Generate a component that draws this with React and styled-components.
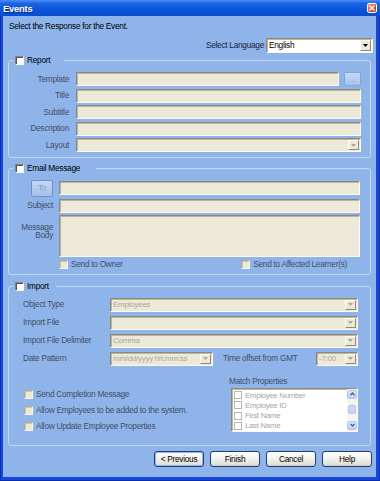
import React from "react";
import styled, { createGlobalStyle, css } from "styled-components";

const GlobalStyle = createGlobalStyle`
  html, body { margin: 0; padding: 0; }
  body {
    width: 380px; height: 481px; overflow: hidden; background: #8fb4ea;
    font-family: "Liberation Sans", Arial, sans-serif;
    font-size: 8.3px; letter-spacing: -0.28px; color: #000;
  }
  * { box-sizing: border-box; }
`;

const inset = css`
  border: 1px solid;
  border-color: #8e8a77 #fbfaf6 #fbfaf6 #8e8a77;
  box-shadow: inset 1px 1px 0 #b9b5a3;
`;

const Window = styled.div`
  width: 380px; height: 481px;
  display: flex; flex-direction: column;
  background: #1649da;
  box-shadow: inset 1px 0 #0a2fa8, inset -1px 0 #0a2fa8, inset 0 -1px #0a2fa8;
`;

const TitleBar = styled.div`
  height: 16px; flex: none;
  display: flex; align-items: center; justify-content: space-between;
  padding: 0 3px 0 3px;
  background: linear-gradient(to bottom, #4b8cf5 0%, #1c64e4 22%, #0c57dc 55%, #0a4ccd 100%);
`;

const TitleText = styled.span`
  color: #fff; font-weight: bold; font-size: 9.5px;
  text-shadow: 1px 1px 0 #0a2a84;
`;

const CloseButton = styled.div`
  width: 10px; height: 10px;
  border: 1px solid #fff; border-radius: 2px;
  background: linear-gradient(135deg, #f0a080, #da5432 55%, #c23c1c);
  display: flex; align-items: center; justify-content: center;
`;

const Client = styled.div`
  flex: 1;
  margin: 0 4px 4px 3px;
  background: #8fb4ea;
  padding: 0 5px;
  display: flex; flex-direction: column;
`;

const Intro = styled.div`
  margin-top: 5px; padding-left: 1px; line-height: 11px;
`;

const LangRow = styled.div`
  display: flex; justify-content: flex-end; align-items: center; gap: 2px;
  margin-top: 6px; margin-right: -2px;
`;

const Label = styled.span`
  color: ${p => p.$color || "#434f68"};
  line-height: ${p => p.$lh || 11}px;
  text-align: ${p => p.$align || "left"};
  align-self: ${p => p.$self || "center"};
  margin-top: ${p => p.$mt || 0}px;
  flex: ${p => (p.$grow ? "1" : "none")};
  white-space: nowrap;
`;

const SelectBox = styled.div`
  ${inset};
  width: ${p => (p.$w ? `${p.$w}px` : "auto")};
  flex: ${p => (p.$w ? "none" : "1")};
  height: ${p => p.$h || 14}px;
  background: ${p => (p.$enabled ? "#fff" : "#ece9d8")};
  display: flex; align-items: center;
  padding-left: 2px;
`;

const SelectValue = styled.span`
  flex: 1; line-height: 11px;
  font-size: ${p => (p.$enabled ? "8.3px" : "8px")};
  color: ${p => (p.$enabled ? "#000" : "#a9a79c")};
  white-space: nowrap; overflow: hidden;
`;

const DropArrow = styled.span`
  width: 11px; height: ${p => p.$h || 10}px; margin-right: 1px; flex: none;
  background: #ece9d8;
  border: 1px solid; border-color: #fff #8e8a77 #8e8a77 #fff;
  display: flex; align-items: center; justify-content: center;
`;

const Group = styled.fieldset`
  margin: ${p => p.$mt}px 0 0 0;
  padding: 0;
  border: 1px solid #c3d7f5;
  border-radius: 3px;
  min-width: 0;
`;

const Legend = styled.legend`
  margin-left: 4px;
  padding: 0 ${p => p.$pr}px 0 2px;
  height: 11px;
  display: flex; align-items: center; gap: 3px;
  line-height: 11px;
`;

const FieldGrid = styled.div`
  display: grid;
  grid-template-columns: ${p => p.$cols};
  grid-template-rows: ${p => p.$rows || "none"};
  grid-auto-rows: 14px;
  column-gap: ${p => p.$cgap}px;
  row-gap: ${p => p.$rgap}px;
  padding: ${p => p.$pad};
`;

const GroupBody = styled.div`
  padding: ${p => p.$pad};
`;

const TextBox = styled.div`
  ${inset};
  background: #ece9d8;
  height: ${p => p.$h || 14}px;
  flex: 1;
  align-self: center;
`;

const Cell = styled.div`
  display: flex; align-items: center; gap: ${p => p.$gap || 0}px;
  min-width: 0;
`;

const BrowseButton = styled.div`
  width: 17px; height: 14px; flex: none;
  border: 1px solid #86a3d6; border-radius: 2px;
  background: linear-gradient(#c5d9f8, #a9c3ee);
  color: #8ea3c8; font-size: 8px; line-height: 13px; text-align: center;
`;

const ToButton = styled.div`
  width: 22px; height: 17px; justify-self: end;
  border: 1px solid #6f90c8; border-radius: 2px;
  background: linear-gradient(#c4d7f6, #a5c0ec);
  color: #8aa0c4; line-height: 15px; text-align: center;
`;

const SendRow = styled.div`
  grid-column: 2;
  display: flex; justify-content: space-between; align-items: center;
  padding-right: 13px;
`;

const CheckItem = styled.div`
  display: flex; align-items: center; gap: ${p => p.$gap || 3}px;
  height: 11px;
`;

const Check = styled.span`
  flex: none;
  width: ${p => (p.$kind === "list" ? 8 : 9)}px;
  height: ${p => (p.$kind === "list" ? 8 : 9)}px;
  ${p =>
    p.$kind === "list"
      ? css`background: #fff; border: 1px solid #b4b4b4;`
      : p.$kind === "on"
      ? css`
          background: #fff; border: 1px solid;
          border-color: #8a8674 #f7f6f0 #f7f6f0 #8a8674;
          box-shadow: inset 1px 1px 0 #55534a;
        `
      : css`
          background: #ece9d8; border: 1px solid;
          border-color: #aeab9a #f7f6f0 #f7f6f0 #aeab9a;
          box-shadow: inset 1px 1px 0 #c9c6b6;
        `}
`;

const BottomSection = styled.div`
  display: flex; justify-content: space-between; align-items: flex-end;
  margin-top: 10px;
`;

const CheckColumn = styled.div`
  display: flex; flex-direction: column; gap: 5px;
  padding-left: 1px;
`;

const MatchColumn = styled.div`
  width: 129px; display: flex; flex-direction: column; align-items: flex-start;
`;

const ListBox = styled.div`
  ${inset};
  background: #fff;
  width: 127px; height: 44px; margin: 2px 0 0 2px;
  display: flex;
`;

const ListItems = styled.div`
  flex: 1; padding: 1px 0 0 2px;
  display: flex; flex-direction: column;
`;

const ListItem = styled.div`
  height: 10.4px; display: flex; align-items: center; gap: 3px;
  color: #a5a5a5; font-size: 7.8px; white-space: nowrap;
`;

const ScrollBar = styled.div`
  width: 10px; flex: none;
  background: #f5f4ef;
  display: flex; flex-direction: column; justify-content: space-between;
  padding: 1px 0;
`;

const ScrollBtn = styled.div`
  height: 9px;
  border: 1px solid #b3c6ef; border-radius: 2px;
  background: linear-gradient(#dbe6fd, #bcd0f7);
  display: flex; align-items: center; justify-content: center;
`;

const ScrollThumb = styled.div`
  height: 9px; margin: 0 1px;
  border: 1px solid #b3c6ef; border-radius: 2px;
  background: #c7d7f8;
`;

const ButtonBar = styled.div`
  display: flex; justify-content: flex-end; gap: 6px;
  margin: 5px -1px 0 0;
`;

const Button = styled.button`
  width: 50px; height: 16px; padding: 0;
  font: inherit; letter-spacing: inherit; color: #000;
  border: 1px solid #1f3f7c; border-radius: 3px;
  background: linear-gradient(#ffffff, #f2f2ee 45%, #dddcd4);
  box-shadow: ${p =>
    p.$default ? "inset 0 0 0 1px #97b5e9" : "inset 0 -1px 0 #cfcdc0"};
`;

const Tri = ({ color = "#000" }) => (
  <svg width="5" height="3" viewBox="0 0 5 3">
    <polygon points="0,0 5,0 2.5,3" fill={color} />
  </svg>
);

const Chevron = ({ up }) => (
  <svg width="5" height="4" viewBox="0 0 5 4">
    <polyline
      points={up ? "0.5,3.2 2.5,1 4.5,3.2" : "0.5,0.8 2.5,3 4.5,0.8"}
      fill="none" stroke="#3f5687" strokeWidth="1.2"
    />
  </svg>
);

const DisabledSelect = ({ value, w }) => (
  <SelectBox $w={w}>
    <SelectValue>{value}</SelectValue>
    <DropArrow><Tri color="#a9a79c" /></DropArrow>
  </SelectBox>
);

export default function App() {
  return (
    <>
      <GlobalStyle />
      <Window>
        <TitleBar>
          <TitleText>Events</TitleText>
          <CloseButton>
            <svg width="6" height="6" viewBox="0 0 6 6">
              <path d="M0.5 0.5 L5.5 5.5 M5.5 0.5 L0.5 5.5" stroke="#fff" strokeWidth="1.4" />
            </svg>
          </CloseButton>
        </TitleBar>
        <Client>
          <Intro>Select the Response for the Event.</Intro>
          <LangRow>
            <Label $color="#1a2442">Select Language</Label>
            <SelectBox $w={107} $h={15} $enabled>
              <SelectValue $enabled>English</SelectValue>
              <DropArrow $h={11}><Tri /></DropArrow>
            </SelectBox>
          </LangRow>

          <Group $mt={2}>
            <Legend $pr={14}>
              <Check $kind="on" />
              <span>Report</span>
            </Legend>
            <FieldGrid $cols="60px 1fr" $cgap={7} $rgap={2.6} $pad="6px 9px 5px 0">
              <Label $align="right">Template</Label>
              <Cell $gap={5}>
                <TextBox />
                <BrowseButton>...</BrowseButton>
              </Cell>
              <Label $align="right">Title</Label>
              <TextBox />
              <Label $align="right">Subtitle</Label>
              <TextBox />
              <Label $align="right">Description</Label>
              <TextBox />
              <Label $align="right">Layout</Label>
              <DisabledSelect value="" />
            </FieldGrid>
          </Group>

          <Group $mt={5}>
            <Legend $pr={16}>
              <Check $kind="on" />
              <span>Email Message</span>
            </Legend>
            <FieldGrid
              $cols="44px 1fr" $cgap={6} $rgap={2}
              $rows="17px 14px 42px 11px" $pad="5.5px 10px 4.5px 0"
            >
              <ToButton>To</ToButton>
              <TextBox />
              <Label $align="right">Subject</Label>
              <TextBox />
              <Label $align="right" $self="start" $mt={8} $lh={8.5}>
                Message<br />Body
              </Label>
              <TextBox $h={42} />
              <SendRow>
                <CheckItem>
                  <Check />
                  <Label>Send to Owner</Label>
                </CheckItem>
                <CheckItem>
                  <Check />
                  <Label>Send to Affected Learner(s)</Label>
                </CheckItem>
              </SendRow>
            </FieldGrid>
          </Group>

          <Group $mt={6}>
            <Legend $pr={7}>
              <Check $kind="on" />
              <span>Import</span>
            </Legend>
            <GroupBody $pad="5.5px 12px 13px 14px">
              <FieldGrid $cols="80px 1fr" $cgap={7} $rgap={4} $pad="0">
                <Label>Object Type</Label>
                <DisabledSelect value="Employees" />
                <Label>Import File</Label>
                <DisabledSelect value="" />
                <Label>Import File Delimiter</Label>
                <DisabledSelect value="Comma" />
                <Label>Date Pattern</Label>
                <Cell $gap={10}>
                  <DisabledSelect value="mm/dd/yyyy hh:mm:ss" w={103} />
                  <Label $grow>Time offset from GMT</Label>
                  <DisabledSelect value="-7:00" w={42} />
                </Cell>
              </FieldGrid>
              <BottomSection>
                <CheckColumn>
                  <CheckItem $gap={3}>
                    <Check />
                    <Label>Send Completion Message</Label>
                  </CheckItem>
                  <CheckItem $gap={3}>
                    <Check />
                    <Label>Allow Employees to be added to the system.</Label>
                  </CheckItem>
                  <CheckItem $gap={3}>
                    <Check />
                    <Label>Allow Update Employee Properties</Label>
                  </CheckItem>
                </CheckColumn>
                <MatchColumn>
                  <Label $lh={10} $self="flex-start">Match Properties</Label>
                  <ListBox>
                    <ListItems>
                      {["Employee Number", "Employee ID", "First Name", "Last Name"].map(t => (
                        <ListItem key={t}>
                          <Check $kind="list" />
                          {t}
                        </ListItem>
                      ))}
                    </ListItems>
                    <ScrollBar>
                      <ScrollBtn><Chevron up /></ScrollBtn>
                      <ScrollThumb />
                      <ScrollBtn><Chevron /></ScrollBtn>
                    </ScrollBar>
                  </ListBox>
                </MatchColumn>
              </BottomSection>
            </GroupBody>
          </Group>

          <ButtonBar>
            <Button $default>&lt; Previous</Button>
            <Button>Finish</Button>
            <Button>Cancel</Button>
            <Button>Help</Button>
          </ButtonBar>
        </Client>
      </Window>
    </>
  );
}
